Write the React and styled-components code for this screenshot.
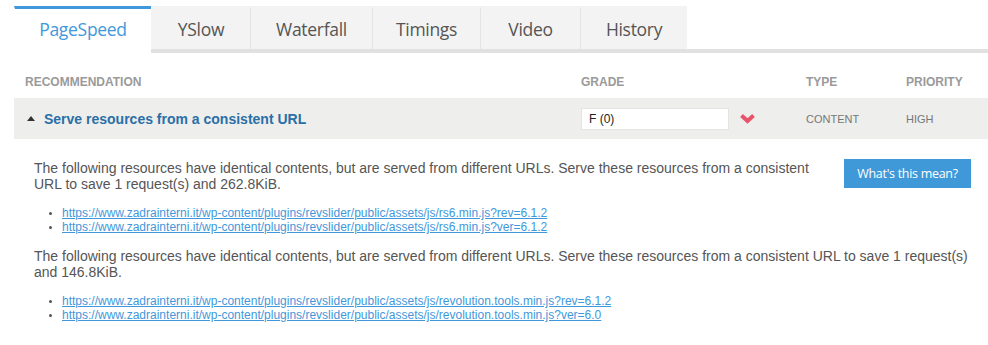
import React from "react";
import styled, { createGlobalStyle } from "styled-components";

const GlobalStyle = createGlobalStyle`
  body {
    margin: 0;
    background: #ffffff;
    font-family: "Liberation Sans", Arial, sans-serif;
  }
`;

const blue = "#3f98db";

const Page = styled.div`
  width: 974px;
  margin-left: 14px;
  padding-top: 6px;
`;

const TabBar = styled.div`
  display: flex;
  border-bottom: 4px solid #e1e1e1;
`;

const Tab = styled.div`
  box-sizing: border-box;
  display: flex;
  align-items: center;
  justify-content: center;
  width: ${(p) => p.width}px;
  height: 43px;
  font-family: "Open Sans", "Noto Sans", sans-serif;
  font-size: 17.5px;
  font-weight: 500;
  letter-spacing: -0.3px;
  color: ${(p) => (p.active ? blue : "#555555")};
  background: ${(p) => (p.active ? "#ffffff" : "#f3f3f3")};
  border-top: 3px solid ${(p) => (p.active ? blue : "#f3f3f3")};
  border-left: 1px solid ${(p) => (p.divider ? "#e3e3e3" : "transparent")};
  margin-bottom: ${(p) => (p.active ? "-4px" : "0")};
  height: ${(p) => (p.active ? "47px" : "43px")};
  padding-bottom: ${(p) => (p.active ? "4px" : "0")};
`;

const Columns = styled.div`
  display: grid;
  grid-template-columns: 556px 225px 100px 1fr;
`;

const HeadRow = styled(Columns)`
  height: 45px;
  align-items: end;
  padding-bottom: 9px;
  box-sizing: border-box;
`;

const HeadCell = styled.div`
  padding: 0 11px;
  font-size: 12px;
  font-weight: bold;
  color: #9a9a9a;
  text-transform: uppercase;
`;

const RuleRow = styled(Columns)`
  height: 41px;
  align-items: center;
  background: #eeeeed;
`;

const Cell = styled.div`
  display: flex;
  align-items: center;
  padding: 0 11px;
  font-size: 11px;
  color: #777777;
`;

const Caret = styled.span`
  width: 0;
  height: 0;
  margin: 0 9px 0 2px;
  border-left: 4px solid transparent;
  border-right: 4px solid transparent;
  border-bottom: 5px solid #333333;
`;

const RuleTitle = styled.span`
  font-size: 14px;
  font-weight: bold;
  color: #2a6fa6;
`;

const GradeBox = styled.div`
  box-sizing: border-box;
  width: 148px;
  height: 22px;
  padding: 0 7px;
  display: flex;
  align-items: center;
  background: #ffffff;
  border: 1px solid #e4e4e4;
  font-size: 12px;
  color: #222222;
`;

const Chevron = styled.svg`
  margin-left: 10px;
`;

const Details = styled.div`
  padding: 21px 14px 0 20px;
  font-size: 14px;
  line-height: 16px;
  color: #555555;
`;

const HelpButton = styled.button`
  float: right;
  width: 127px;
  height: 29px;
  margin: -1px 3px 10px 30px;
  border: none;
  background: #3f99d9;
  color: #ffffff;
  font-family: "Open Sans", "Noto Sans", sans-serif;
  font-size: 12.5px;
  letter-spacing: -0.3px;
  cursor: pointer;
`;

const Para = styled.p`
  margin: 0 0 14px;
`;

const UrlList = styled.ul`
  margin: 0 0 14px;
  padding-left: 28px;
  font-size: 12px;
  line-height: 14px;
  list-style: disc;
  color: #555555;
  li::marker {
    font-size: 10px;
  }
`;

const UrlLink = styled.a`
  color: ${blue};
  text-decoration: underline;
`;

const tabs = [
  { name: "PageSpeed", width: 137 },
  { name: "YSlow", width: 99 },
  { name: "Waterfall", width: 122 },
  { name: "Timings", width: 108 },
  { name: "Video", width: 100 },
  { name: "History", width: 107 },
];

const base = "https://www.zadrainterni.it/wp-content/plugins/revslider/public/assets/js/";

const groups = [
  {
    text:
      "The following resources have identical contents, but are served from different URLs. Serve these resources from a consistent URL to save 1 request(s) and 262.8KiB.",
    urls: [base + "rs6.min.js?rev=6.1.2", base + "rs6.min.js?ver=6.1.2"],
  },
  {
    text:
      "The following resources have identical contents, but are served from different URLs. Serve these resources from a consistent URL to save 1 request(s) and 146.8KiB.",
    urls: [base + "revolution.tools.min.js?rev=6.1.2", base + "revolution.tools.min.js?ver=6.0"],
  },
];

export default function App() {
  return (
    <Page>
      <GlobalStyle />
      <TabBar>
        {tabs.map((t, i) => (
          <Tab key={t.name} width={t.width} active={i === 0} divider={i > 1}>
            {t.name}
          </Tab>
        ))}
      </TabBar>
      <HeadRow>
        <HeadCell>Recommendation</HeadCell>
        <HeadCell>Grade</HeadCell>
        <HeadCell>Type</HeadCell>
        <HeadCell>Priority</HeadCell>
      </HeadRow>
      <RuleRow>
        <Cell>
          <Caret />
          <RuleTitle>Serve resources from a consistent URL</RuleTitle>
        </Cell>
        <Cell>
          <GradeBox>F (0)</GradeBox>
          <Chevron width="17" height="11" viewBox="0 0 17 11">
            <path d="M2.5 2.5 L8.5 8 L14.5 2.5" fill="none" stroke="#e9546b" strokeWidth="4" />
          </Chevron>
        </Cell>
        <Cell>CONTENT</Cell>
        <Cell>HIGH</Cell>
      </RuleRow>
      <Details>
        <HelpButton>What's this mean?</HelpButton>
        {groups.map((g, i) => (
          <div key={i}>
            <Para>{g.text}</Para>
            <UrlList>
              {g.urls.map((u) => (
                <li key={u}>
                  <UrlLink href="#">{u}</UrlLink>
                </li>
              ))}
            </UrlList>
          </div>
        ))}
      </Details>
    </Page>
  );
}
